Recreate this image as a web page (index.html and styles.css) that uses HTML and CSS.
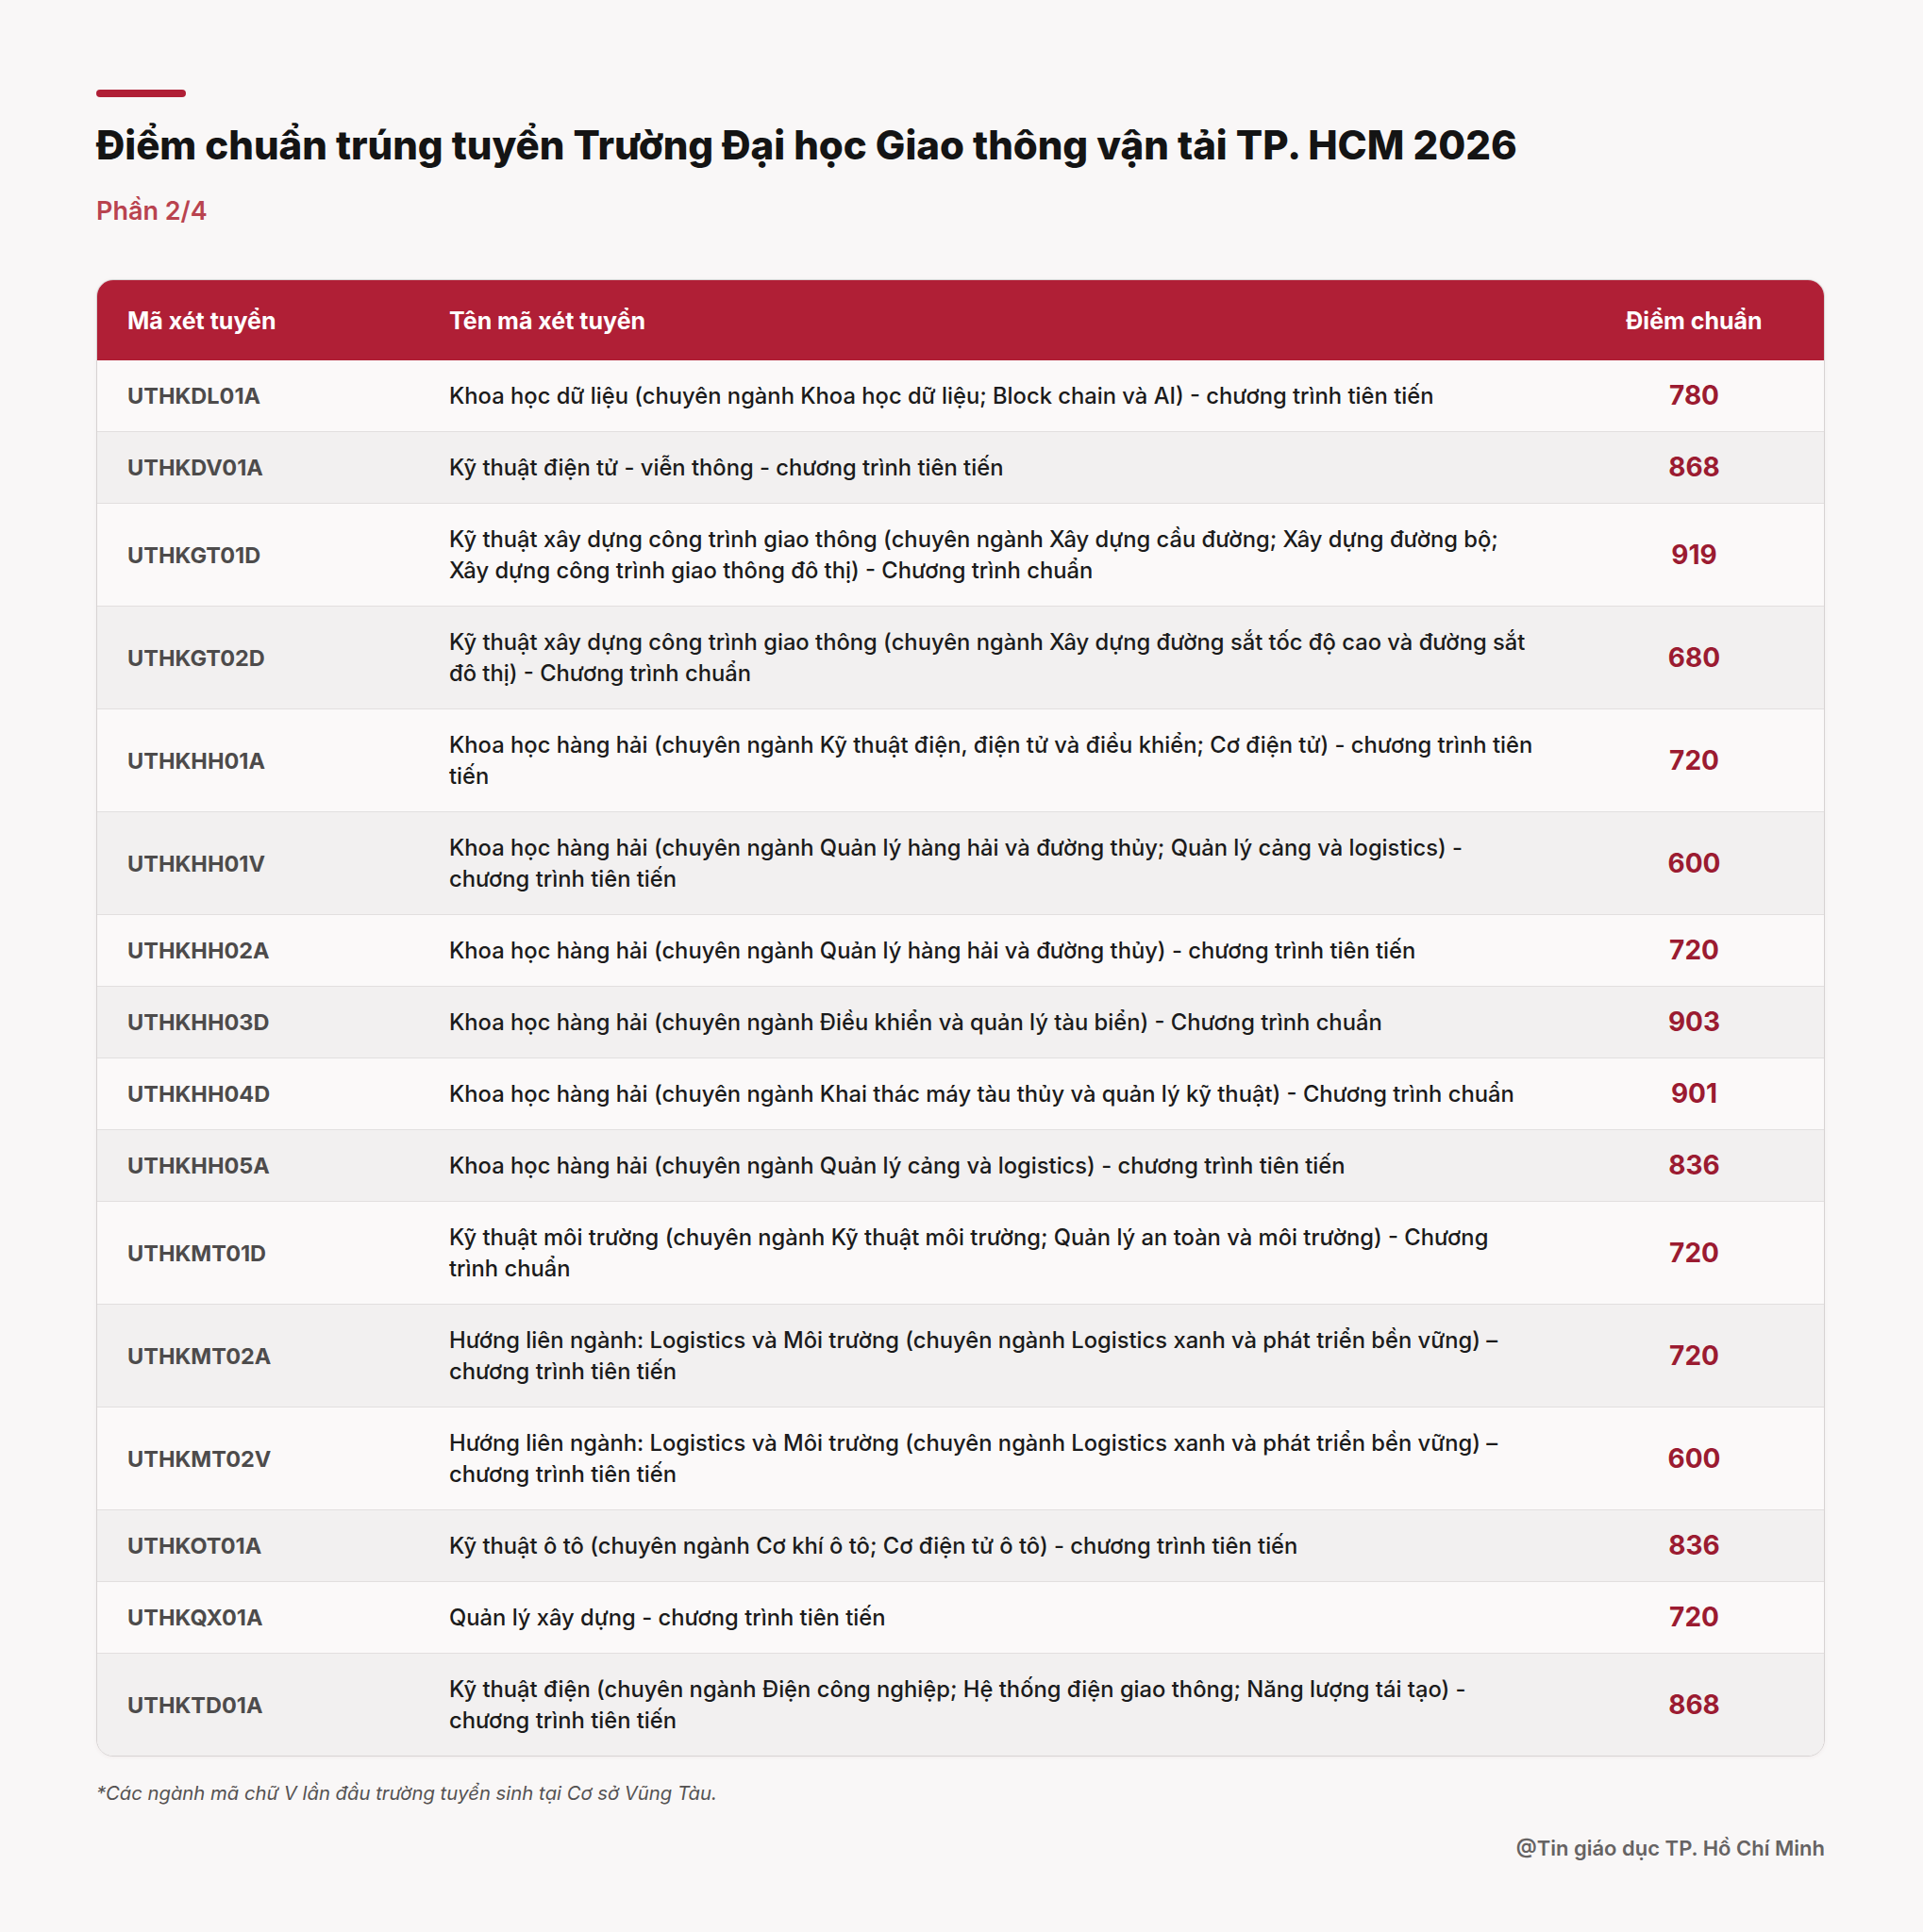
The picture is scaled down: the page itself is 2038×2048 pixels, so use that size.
FILE: index.html
```html
<!DOCTYPE html>
<html lang="vi">
<head>
<meta charset="utf-8">
<title>Điểm chuẩn trúng tuyển Trường Đại học Giao thông vận tải TP. HCM 2026</title>
<link rel="stylesheet" href="styles.css">
</head>
<body>
<main class="page">
  <div class="accent-bar"></div>
  <h1 class="title">Điểm chuẩn trúng tuyển Trường Đại học Giao thông vận tải TP. HCM 2026</h1>
  <p class="subtitle">Phần 2/4</p>

  <div class="table-card">
    <table class="scores">
      <colgroup>
        <col class="col-code">
        <col class="col-name">
        <col class="col-score">
      </colgroup>
      <thead>
        <tr>
          <th class="th-code">Mã xét tuyển</th>
          <th class="th-name">Tên mã xét tuyển</th>
          <th class="th-score">Điểm chuẩn</th>
        </tr>
      </thead>
      <tbody>
        <tr><td class="code">UTHKDL01A</td><td class="name">Khoa học dữ liệu (chuyên ngành Khoa học dữ liệu; Block chain và AI) - chương trình tiên tiến</td><td class="score">780</td></tr>
        <tr><td class="code">UTHKDV01A</td><td class="name">Kỹ thuật điện tử - viễn thông - chương trình tiên tiến</td><td class="score">868</td></tr>
        <tr><td class="code">UTHKGT01D</td><td class="name">Kỹ thuật xây dựng công trình giao thông (chuyên ngành Xây dựng cầu đường; Xây dựng đường bộ; Xây dựng công trình giao thông đô thị) - Chương trình chuẩn</td><td class="score">919</td></tr>
        <tr><td class="code">UTHKGT02D</td><td class="name">Kỹ thuật xây dựng công trình giao thông (chuyên ngành Xây dựng đường sắt tốc độ cao và đường sắt đô thị) - Chương trình chuẩn</td><td class="score">680</td></tr>
        <tr><td class="code">UTHKHH01A</td><td class="name">Khoa học hàng hải (chuyên ngành Kỹ thuật điện, điện tử và điều khiển; Cơ điện tử) - chương trình tiên tiến</td><td class="score">720</td></tr>
        <tr><td class="code">UTHKHH01V</td><td class="name">Khoa học hàng hải (chuyên ngành Quản lý hàng hải và đường thủy; Quản lý cảng và logistics) - chương trình tiên tiến</td><td class="score">600</td></tr>
        <tr><td class="code">UTHKHH02A</td><td class="name">Khoa học hàng hải (chuyên ngành Quản lý hàng hải và đường thủy) - chương trình tiên tiến</td><td class="score">720</td></tr>
        <tr><td class="code">UTHKHH03D</td><td class="name">Khoa học hàng hải (chuyên ngành Điều khiển và quản lý tàu biển) - Chương trình chuẩn</td><td class="score">903</td></tr>
        <tr><td class="code">UTHKHH04D</td><td class="name">Khoa học hàng hải (chuyên ngành Khai thác máy tàu thủy và quản lý kỹ thuật) - Chương trình chuẩn</td><td class="score">901</td></tr>
        <tr><td class="code">UTHKHH05A</td><td class="name">Khoa học hàng hải (chuyên ngành Quản lý cảng và logistics) - chương trình tiên tiến</td><td class="score">836</td></tr>
        <tr><td class="code">UTHKMT01D</td><td class="name">Kỹ thuật môi trường (chuyên ngành Kỹ thuật môi trường; Quản lý an toàn và môi trường) - Chương trình chuẩn</td><td class="score">720</td></tr>
        <tr><td class="code">UTHKMT02A</td><td class="name">Hướng liên ngành: Logistics và Môi trường (chuyên ngành Logistics xanh và phát triển bền vững) – chương trình tiên tiến</td><td class="score">720</td></tr>
        <tr><td class="code">UTHKMT02V</td><td class="name">Hướng liên ngành: Logistics và Môi trường (chuyên ngành Logistics xanh và phát triển bền vững) – chương trình tiên tiến</td><td class="score">600</td></tr>
        <tr><td class="code">UTHKOT01A</td><td class="name">Kỹ thuật ô tô (chuyên ngành Cơ khí ô tô; Cơ điện tử ô tô) - chương trình tiên tiến</td><td class="score">836</td></tr>
        <tr><td class="code">UTHKQX01A</td><td class="name">Quản lý xây dựng - chương trình tiên tiến</td><td class="score">720</td></tr>
        <tr><td class="code">UTHKTD01A</td><td class="name">Kỹ thuật điện (chuyên ngành Điện công nghiệp; Hệ thống điện giao thông; Năng lượng tái tạo) - chương trình tiên tiến</td><td class="score">868</td></tr>
      </tbody>
    </table>
  </div>

  <p class="footnote">*Các ngành mã chữ V lần đầu trường tuyển sinh tại Cơ sở Vũng Tàu.</p>
  <p class="credit">@Tin giáo dục TP. Hồ Chí Minh</p>
</main>
</body>
</html>
```

FILE: styles.css
```css
* { box-sizing: border-box; }

html, body {
  margin: 0;
  padding: 0;
  background: #f9f7f7;
}

body {
  font-family: Inter, "Noto Sans", "Liberation Sans", sans-serif;
  color: #1b1b1b;
}

.page {
  width: 2038px;
  padding: 95px 104px 60px 102px;
}

.accent-bar {
  width: 95px;
  height: 8px;
  border-radius: 4px;
  background: #b01f36;
}

.title {
  margin: 25px 0 0;
  font-size: 42px;
  line-height: 52px;
  font-weight: 800;
  letter-spacing: -0.05px;
  color: #141414;
}

.subtitle {
  margin: 28px 0 0;
  font-size: 27px;
  line-height: 32px;
  font-weight: 600;
  color: #b9434f;
}

.table-card {
  margin-top: 56px;
  border: 1px solid #d7d3d3;
  border-radius: 18px;
  overflow: hidden;
  background: #fbf9f9;
  box-shadow: 0 1px 4px rgba(120, 60, 60, 0.06);
}

.scores {
  width: 100%;
  border-collapse: collapse;
  table-layout: fixed;
}

.col-code { width: 341px; }
.col-name { width: 1214px; }
.col-score { width: auto; }

.scores thead tr {
  background: #b01f36;
  height: 85px;
}

.scores th {
  color: #ffffff;
  font-size: 25px;
  font-weight: 700;
  text-align: left;
  padding: 0 32px;
  line-height: 32px;
}

.scores th.th-score { text-align: center; }

.scores tbody tr {
  border-top: 1px solid #e2dfdf;
}
.scores tbody tr:first-child { border-top: none; }

.scores tbody tr:nth-child(odd) { background: #fbf9f9; }
.scores tbody tr:nth-child(even) { background: #f2f0f0; }

.scores td {
  padding: 21px 32px;
  line-height: 33px;
  vertical-align: middle;
}

.code {
  font-size: 23.5px;
  font-weight: 700;
  color: #4d4b4b;
}

.name {
  font-size: 23.75px;
  font-weight: 500;
  color: #1b1b1b;
}

.score {
  text-align: center;
  font-size: 28px;
  font-weight: 700;
  color: #9b1b31;
}

.footnote {
  margin: 25px 0 0;
  font-size: 20.3px;
  line-height: 28px;
  font-style: italic;
  color: #555252;
}

.credit {
  margin: 30px 0 0;
  text-align: right;
  font-size: 22px;
  line-height: 28px;
  font-weight: 600;
  color: #666363;
}
```
